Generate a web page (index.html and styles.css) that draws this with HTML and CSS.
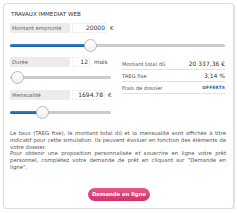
FILE: index.html
```html
<!DOCTYPE html>
<html lang="fr">
<head>
<meta charset="utf-8">
<link rel="stylesheet" href="styles.css">
</head>
<body>
<div class="card">
  <div class="title">TRAVAUX IMMEDIAT WEB</div>
  <div class="field">
    <span class="label">Montant emprunté</span>
    <span class="input in-amount">20000</span>
    <span class="unit">€</span>
  </div>
  <div class="slider">
    <div class="track"></div>
    <div class="fill" style="width:78px"></div>
    <div class="thumb" style="left:74px"></div>
  </div>
  <div class="cols">
    <div class="left">
      <div class="field field-2">
        <span class="label">Durée</span>
        <span class="input in-months">12</span>
        <span class="unit unit-mois">mois</span>
      </div>
      <div class="slider slider-2">
        <div class="track"></div>
        <div class="thumb" style="left:1px"></div>
      </div>
      <div class="field field-3">
        <span class="label">Mensualité</span>
        <span class="input in-month">1694.78</span>
        <span class="unit">€</span>
      </div>
      <div class="slider slider-3">
        <div class="track"></div>
        <div class="fill" style="width:27px"></div>
        <div class="thumb" style="left:26px"></div>
      </div>
    </div>
    <div class="right">
      <div class="row"><span class="k">Montant total dû</span><span class="v">20 337,36 €</span></div>
      <div class="row"><span class="k">TAEG fixe</span><span class="v">3,14 %</span></div>
      <div class="row"><span class="k">Frais de dossier</span><span class="v offer">OFFERTS</span></div>
    </div>
  </div>
  <p class="note">Le taux (TAEG fixe), le montant total dû et la mensualité sont affichés à titre indicatif pour cette simulation. Ils peuvent évoluer en fonction des éléments de votre dossier.<br>Pour obtenir une proposition personnalisée et souscrire en ligne votre prêt personnel, complétez votre demande de prêt en cliquant sur "Demande en ligne".</p>
  <div class="actions"><a class="btn" href="#">Demande en ligne</a></div>
</div>
</body>
</html>
```

FILE: styles.css
```css
* { box-sizing: border-box; }
html, body { margin: 0; padding: 0; background: #ffffff; }
body {
  padding: 3px 3px 0 3px;
  font-family: "DejaVu Sans", Verdana, sans-serif;
  color: #444;
}
.card {
  width: 231px;
  height: 206px;
  border: 1px solid #dcdcdc;
  border-radius: 4px;
  box-shadow: 1px 1px 2px rgba(0,0,0,0.12);
  background: #fff;
  padding: 6px 7px 0 6px;
}
.title {
  font-size: 5.6px;
  line-height: 8px;
  color: #333;
  padding-left: 1px;
}
.field {
  display: flex;
  align-items: center;
  height: 10px;
  margin-top: 5px;
}
.label {
  width: 60px;
  height: 10px;
  background: #ececec;
  font-size: 5.3px;
  line-height: 10px;
  padding-left: 2px;
  color: #666;
}
.input {
  margin-left: 2px;
  height: 10px;
  background: #fff;
  border: 1px solid #f2f2f2;
  font-size: 6px;
  line-height: 8px;
  text-align: right;
  padding-right: 1px;
  color: #333;
}
.in-amount { width: 35px; }
.in-months { width: 18px; }
.in-month { width: 33px; }
.unit {
  margin-left: 3px;
  font-size: 5.6px;
  color: #444;
}
.unit-mois { margin-left: 4px; }
.slider {
  position: relative;
  height: 12px;
  margin-top: 6px;
}
.track {
  position: absolute;
  left: 0; right: 1px;
  top: 5px;
  height: 3px;
  border-radius: 2px;
  background: #cbcbcb;
}
.fill {
  position: absolute;
  left: 0;
  top: 5px;
  height: 3px;
  border-radius: 2px;
  background: linear-gradient(#3d87cc, #165a9e);
}
.thumb {
  position: absolute;
  top: 0;
  width: 13px;
  height: 13px;
  border-radius: 50%;
  background: linear-gradient(#ffffff, #f0f0f0);
  border: 1px solid #b9b9b9;
}
.cols {
  display: grid;
  grid-template-columns: 102px 1fr;
  column-gap: 10px;
}
.field-2 { margin-top: 6px; }
.slider-2 { margin-top: 4px; }
.field-3 { margin-top: 7px; }
.slider-3 { margin-top: 6px; }
.right {
  padding-top: 7px;
  padding-right: 1px;
}
.row {
  display: flex;
  justify-content: space-between;
  align-items: center;
  height: 12px;
  border-bottom: 1px solid #e2e2e2;
}
.k {
  font-size: 5.2px;
  color: #555;
}
.v {
  font-size: 6px;
  color: #333;
}
.offer {
  font-size: 4.4px;
  font-weight: bold;
  color: #3c63a8;
  letter-spacing: 0.1px;
}
.note {
  margin: 12px 0 0 0;
  font-size: 5.35px;
  line-height: 6.8px;
  text-align: justify;
  color: #555;
}
.actions {
  display: flex;
  justify-content: center;
  margin-top: 17px;
}
.btn {
  display: block;
  width: 62px;
  height: 13px;
  border-radius: 7px;
  background: linear-gradient(#e6568a, #d5336a);
  color: #fff;
  font-size: 5.3px;
  font-weight: bold;
  line-height: 13px;
  text-align: center;
  text-decoration: none;
  margin-left: 2px;
}
```
